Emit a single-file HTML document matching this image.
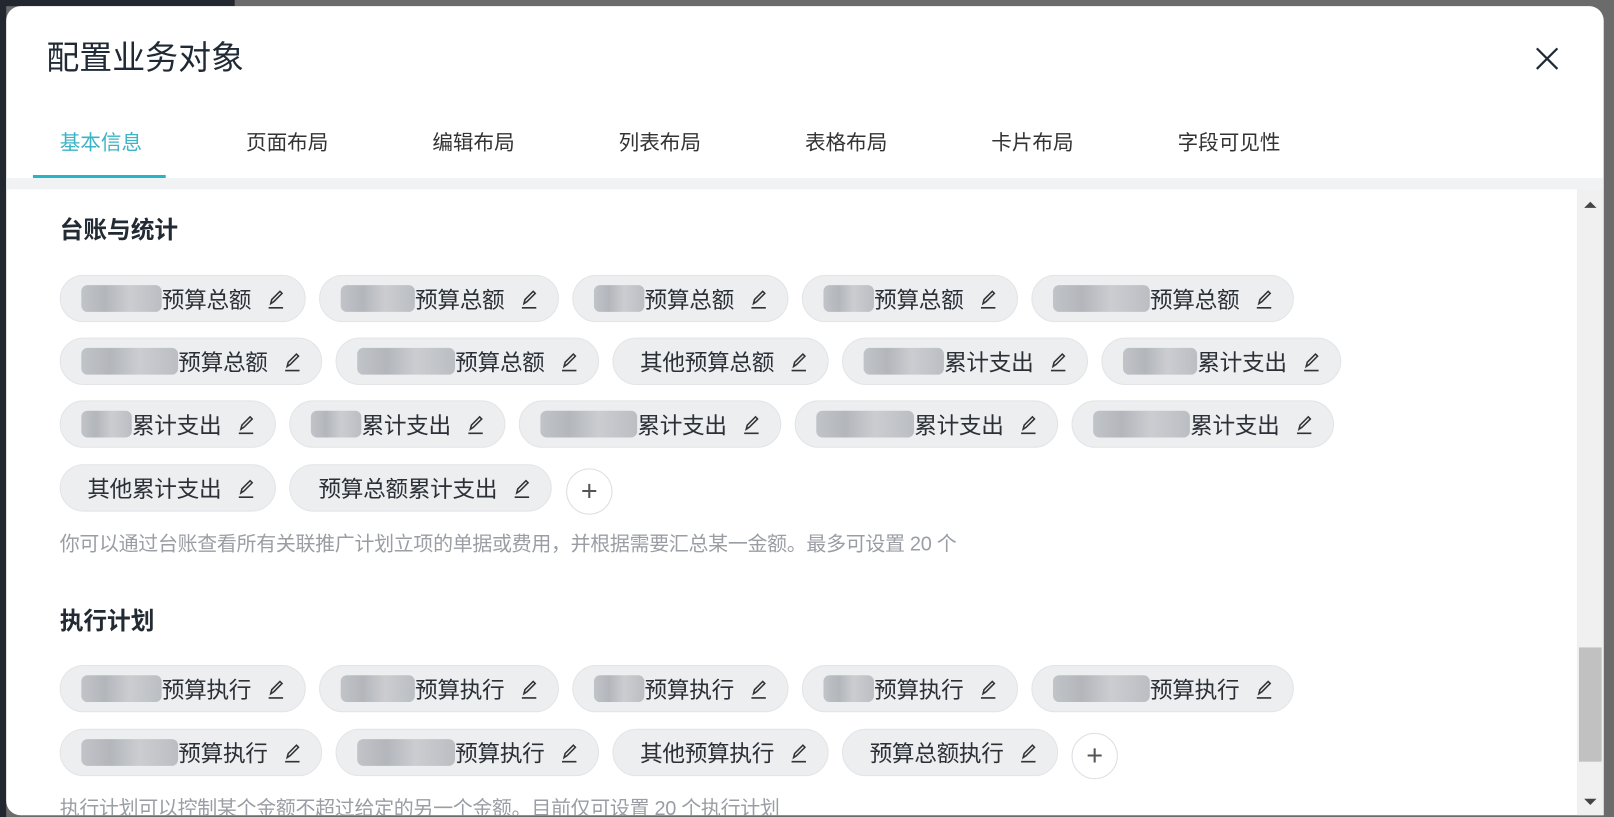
<!DOCTYPE html>
<html><head><meta charset="utf-8"><style>
*{margin:0;padding:0;box-sizing:border-box}
html,body{width:1614px;height:817px;overflow:hidden;background:#6b6b6b;font-family:"Liberation Sans","Noto Sans CJK SC",sans-serif}
#w{position:absolute;left:0;top:0;width:1568px;height:794px;transform:scale(1.02934);transform-origin:0 0}
.dk{position:absolute;background:#23272f}
.modal{position:absolute;left:6px;top:6px;width:1552px;height:786px;background:#fff;border-radius:14px 14px 0 14px;overflow:hidden}
.a{position:absolute;white-space:nowrap}
.title{left:39px;top:25px;font-size:32px;color:#1f2a36}
.tab{top:116px;font-size:20px;color:#333}
.chip{position:absolute;height:46px;background:#eceef0;border:1.5px solid #e2e4e7;border-radius:23px;display:flex;align-items:center;justify-content:flex-end;padding-right:18px;font-size:22px;color:#2b2f36;letter-spacing:-0.3px}
.chip .b{flex:1;margin-left:20px;height:26px;border-radius:6px;background:linear-gradient(90deg,#b9bcc1,#a9acb2 30%,#c5c7cb 60%,#b2b5ba);opacity:.85}
.pen{margin-left:14px;width:20px;height:22px;flex:none}
.plus{position:absolute;width:45px;height:45px;border:1.5px solid #dcdfe3;border-radius:50%;background:#fff;font-size:28px;color:#555;text-align:center;line-height:41px;font-weight:300}
.sec{font-size:23px;font-weight:bold;color:#222a33}
.hint{font-size:19.4px;color:#9a9ea4;letter-spacing:-0.3px}
</style></head><body><div id="w">
<div class="dk" style="left:0;top:0;width:228px;height:6px"></div>
<div class="dk" style="left:0;top:0;width:6px;height:794px"></div>
<div class="modal">
<div class="a title">配置业务对象</div>
<svg class="a" style="left:1485px;top:39px" width="24" height="24" viewBox="0 0 24 24"><path d="M2 2L22 22M22 2L2 22" stroke="#1f2a36" stroke-width="2.2"/></svg>
<div class="a tab" style="left:52px;color:#3bb4c6">基本信息</div>
<div class="a tab" style="left:233px">页面布局</div>
<div class="a tab" style="left:414px">编辑布局</div>
<div class="a tab" style="left:595px">列表布局</div>
<div class="a tab" style="left:776px">表格布局</div>
<div class="a tab" style="left:957px">卡片布局</div>
<div class="a tab" style="left:1138px">字段可见性</div>
<div class="a" style="left:26px;top:164px;width:129px;height:3px;background:#26b5c6"></div>
<div class="a" style="left:0;top:167px;width:1552px;height:11px;background:#f0f2f3"></div>
<div class="a" style="left:1526px;top:178px;width:26px;height:608px;background:#f0f0f0"></div>
<svg class="a" style="left:1532px;top:188px" width="14" height="10"><path d="M1 8L7 2L13 8Z" fill="#444"/></svg>
<svg class="a" style="left:1532px;top:768px" width="14" height="10"><path d="M1 2L7 8L13 2Z" fill="#444"/></svg>
<div class="a" style="left:1528px;top:623px;width:22px;height:111px;background:#c1c1c1"></div>

<div class="a sec" style="left:52px;top:198px">台账与统计</div>
<div class="a hint" style="left:52px;top:506px">你可以通过台账查看所有关联推广计划立项的单据或费用，并根据需要汇总某一金额。最多可设置 20 个</div>
<div class="a sec" style="left:52px;top:578px">执行计划</div>
<div class="a hint" style="left:52px;top:763px">执行计划可以控制某个金额不超过给定的另一个金额。目前仅可设置 20 个执行计划</div>

<div class="chip" style="left:52px;top:261px;width:239px"><div class="b"></div>预算总额<svg class="pen" viewBox="0 0 20 22"><path d="M5 16L6 12L14 4L16 6L8 14Z" fill="none" stroke="#333" stroke-width="1.5"/><path d="M3 20H17" stroke="#333" stroke-width="1.6"/></svg></div>
<div class="chip" style="left:304px;top:261px;width:233px"><div class="b"></div>预算总额<svg class="pen" viewBox="0 0 20 22"><path d="M5 16L6 12L14 4L16 6L8 14Z" fill="none" stroke="#333" stroke-width="1.5"/><path d="M3 20H17" stroke="#333" stroke-width="1.6"/></svg></div>
<div class="chip" style="left:550px;top:261px;width:210px"><div class="b"></div>预算总额<svg class="pen" viewBox="0 0 20 22"><path d="M5 16L6 12L14 4L16 6L8 14Z" fill="none" stroke="#333" stroke-width="1.5"/><path d="M3 20H17" stroke="#333" stroke-width="1.6"/></svg></div>
<div class="chip" style="left:773px;top:261px;width:210px"><div class="b"></div>预算总额<svg class="pen" viewBox="0 0 20 22"><path d="M5 16L6 12L14 4L16 6L8 14Z" fill="none" stroke="#333" stroke-width="1.5"/><path d="M3 20H17" stroke="#333" stroke-width="1.6"/></svg></div>
<div class="chip" style="left:996px;top:261px;width:255px"><div class="b"></div>预算总额<svg class="pen" viewBox="0 0 20 22"><path d="M5 16L6 12L14 4L16 6L8 14Z" fill="none" stroke="#333" stroke-width="1.5"/><path d="M3 20H17" stroke="#333" stroke-width="1.6"/></svg></div>

<div class="chip" style="left:52px;top:322px;width:255px"><div class="b"></div>预算总额<svg class="pen" viewBox="0 0 20 22"><path d="M5 16L6 12L14 4L16 6L8 14Z" fill="none" stroke="#333" stroke-width="1.5"/><path d="M3 20H17" stroke="#333" stroke-width="1.6"/></svg></div>
<div class="chip" style="left:320px;top:322px;width:256px"><div class="b"></div>预算总额<svg class="pen" viewBox="0 0 20 22"><path d="M5 16L6 12L14 4L16 6L8 14Z" fill="none" stroke="#333" stroke-width="1.5"/><path d="M3 20H17" stroke="#333" stroke-width="1.6"/></svg></div>
<div class="chip" style="left:589px;top:322px;width:210px">其他预算总额<svg class="pen" viewBox="0 0 20 22"><path d="M5 16L6 12L14 4L16 6L8 14Z" fill="none" stroke="#333" stroke-width="1.5"/><path d="M3 20H17" stroke="#333" stroke-width="1.6"/></svg></div>
<div class="chip" style="left:812px;top:322px;width:239px"><div class="b"></div>累计支出<svg class="pen" viewBox="0 0 20 22"><path d="M5 16L6 12L14 4L16 6L8 14Z" fill="none" stroke="#333" stroke-width="1.5"/><path d="M3 20H17" stroke="#333" stroke-width="1.6"/></svg></div>
<div class="chip" style="left:1064px;top:322px;width:233px"><div class="b"></div>累计支出<svg class="pen" viewBox="0 0 20 22"><path d="M5 16L6 12L14 4L16 6L8 14Z" fill="none" stroke="#333" stroke-width="1.5"/><path d="M3 20H17" stroke="#333" stroke-width="1.6"/></svg></div>

<div class="chip" style="left:52px;top:383px;width:210px"><div class="b"></div>累计支出<svg class="pen" viewBox="0 0 20 22"><path d="M5 16L6 12L14 4L16 6L8 14Z" fill="none" stroke="#333" stroke-width="1.5"/><path d="M3 20H17" stroke="#333" stroke-width="1.6"/></svg></div>
<div class="chip" style="left:275px;top:383px;width:210px"><div class="b"></div>累计支出<svg class="pen" viewBox="0 0 20 22"><path d="M5 16L6 12L14 4L16 6L8 14Z" fill="none" stroke="#333" stroke-width="1.5"/><path d="M3 20H17" stroke="#333" stroke-width="1.6"/></svg></div>
<div class="chip" style="left:498px;top:383px;width:255px"><div class="b"></div>累计支出<svg class="pen" viewBox="0 0 20 22"><path d="M5 16L6 12L14 4L16 6L8 14Z" fill="none" stroke="#333" stroke-width="1.5"/><path d="M3 20H17" stroke="#333" stroke-width="1.6"/></svg></div>
<div class="chip" style="left:766px;top:383px;width:256px"><div class="b"></div>累计支出<svg class="pen" viewBox="0 0 20 22"><path d="M5 16L6 12L14 4L16 6L8 14Z" fill="none" stroke="#333" stroke-width="1.5"/><path d="M3 20H17" stroke="#333" stroke-width="1.6"/></svg></div>
<div class="chip" style="left:1035px;top:383px;width:255px"><div class="b"></div>累计支出<svg class="pen" viewBox="0 0 20 22"><path d="M5 16L6 12L14 4L16 6L8 14Z" fill="none" stroke="#333" stroke-width="1.5"/><path d="M3 20H17" stroke="#333" stroke-width="1.6"/></svg></div>

<div class="chip" style="left:52px;top:445px;width:210px">其他累计支出<svg class="pen" viewBox="0 0 20 22"><path d="M5 16L6 12L14 4L16 6L8 14Z" fill="none" stroke="#333" stroke-width="1.5"/><path d="M3 20H17" stroke="#333" stroke-width="1.6"/></svg></div>
<div class="chip" style="left:275px;top:445px;width:255px">预算总额累计支出<svg class="pen" viewBox="0 0 20 22"><path d="M5 16L6 12L14 4L16 6L8 14Z" fill="none" stroke="#333" stroke-width="1.5"/><path d="M3 20H17" stroke="#333" stroke-width="1.6"/></svg></div>
<div class="plus" style="left:544px;top:449px">+</div>

<div class="chip" style="left:52px;top:640px;width:239px"><div class="b"></div>预算执行<svg class="pen" viewBox="0 0 20 22"><path d="M5 16L6 12L14 4L16 6L8 14Z" fill="none" stroke="#333" stroke-width="1.5"/><path d="M3 20H17" stroke="#333" stroke-width="1.6"/></svg></div>
<div class="chip" style="left:304px;top:640px;width:233px"><div class="b"></div>预算执行<svg class="pen" viewBox="0 0 20 22"><path d="M5 16L6 12L14 4L16 6L8 14Z" fill="none" stroke="#333" stroke-width="1.5"/><path d="M3 20H17" stroke="#333" stroke-width="1.6"/></svg></div>
<div class="chip" style="left:550px;top:640px;width:210px"><div class="b"></div>预算执行<svg class="pen" viewBox="0 0 20 22"><path d="M5 16L6 12L14 4L16 6L8 14Z" fill="none" stroke="#333" stroke-width="1.5"/><path d="M3 20H17" stroke="#333" stroke-width="1.6"/></svg></div>
<div class="chip" style="left:773px;top:640px;width:210px"><div class="b"></div>预算执行<svg class="pen" viewBox="0 0 20 22"><path d="M5 16L6 12L14 4L16 6L8 14Z" fill="none" stroke="#333" stroke-width="1.5"/><path d="M3 20H17" stroke="#333" stroke-width="1.6"/></svg></div>
<div class="chip" style="left:996px;top:640px;width:255px"><div class="b"></div>预算执行<svg class="pen" viewBox="0 0 20 22"><path d="M5 16L6 12L14 4L16 6L8 14Z" fill="none" stroke="#333" stroke-width="1.5"/><path d="M3 20H17" stroke="#333" stroke-width="1.6"/></svg></div>

<div class="chip" style="left:52px;top:702px;width:255px"><div class="b"></div>预算执行<svg class="pen" viewBox="0 0 20 22"><path d="M5 16L6 12L14 4L16 6L8 14Z" fill="none" stroke="#333" stroke-width="1.5"/><path d="M3 20H17" stroke="#333" stroke-width="1.6"/></svg></div>
<div class="chip" style="left:320px;top:702px;width:256px"><div class="b"></div>预算执行<svg class="pen" viewBox="0 0 20 22"><path d="M5 16L6 12L14 4L16 6L8 14Z" fill="none" stroke="#333" stroke-width="1.5"/><path d="M3 20H17" stroke="#333" stroke-width="1.6"/></svg></div>
<div class="chip" style="left:589px;top:702px;width:210px">其他预算执行<svg class="pen" viewBox="0 0 20 22"><path d="M5 16L6 12L14 4L16 6L8 14Z" fill="none" stroke="#333" stroke-width="1.5"/><path d="M3 20H17" stroke="#333" stroke-width="1.6"/></svg></div>
<div class="chip" style="left:812px;top:702px;width:210px">预算总额执行<svg class="pen" viewBox="0 0 20 22"><path d="M5 16L6 12L14 4L16 6L8 14Z" fill="none" stroke="#333" stroke-width="1.5"/><path d="M3 20H17" stroke="#333" stroke-width="1.6"/></svg></div>
<div class="plus" style="left:1035px;top:706px">+</div>
</div>
</div></body></html>
